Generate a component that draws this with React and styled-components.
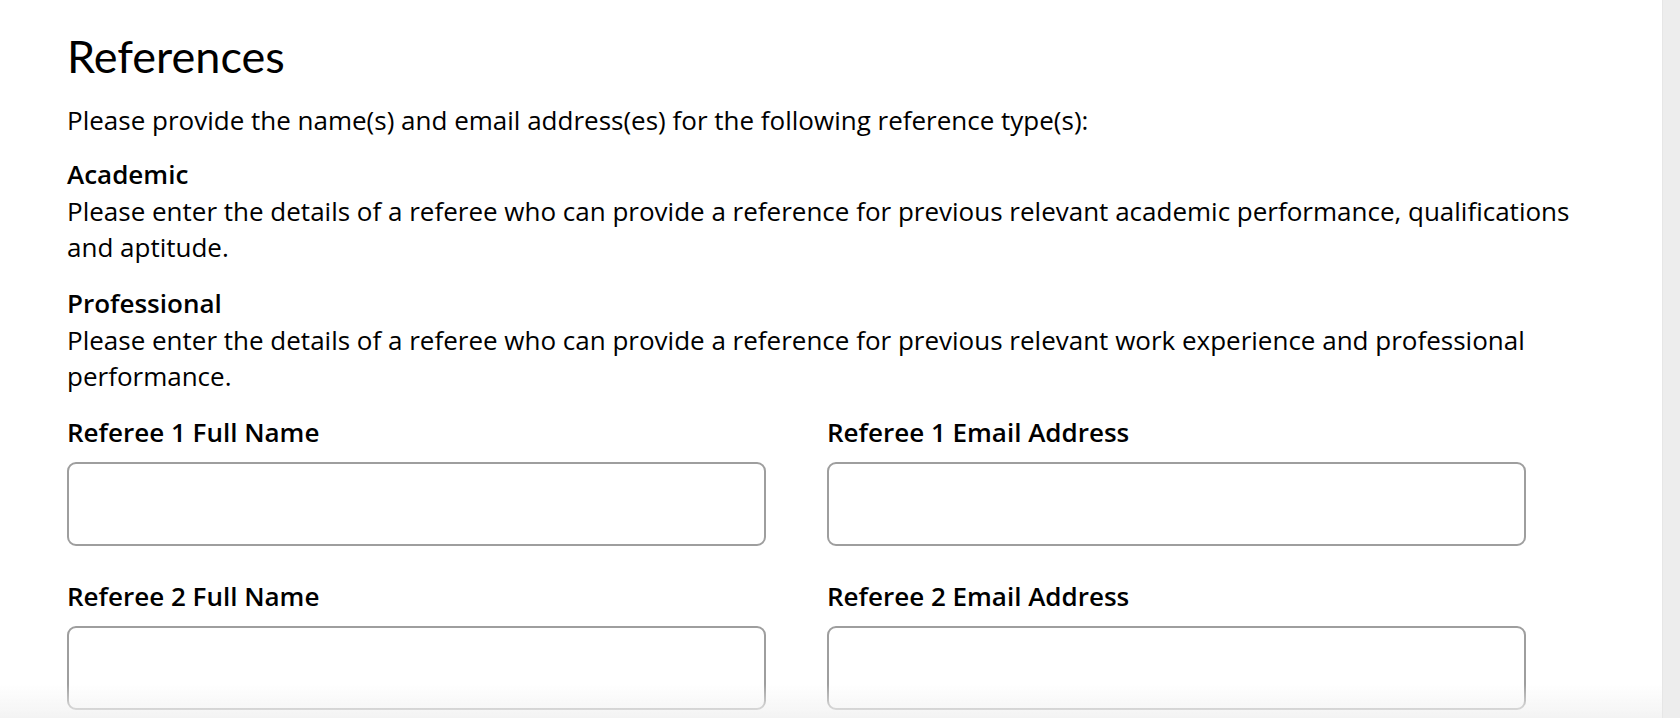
import React from 'react';
import styled, { createGlobalStyle } from 'styled-components';

const GlobalStyle = createGlobalStyle`
  html, body {
    margin: 0;
    padding: 0;
    background: #ffffff;
    overflow: hidden;
  }
  body {
    font-family: "Open Sans", "Noto Sans", sans-serif;
    color: #000;
  }
  * {
    box-sizing: border-box;
  }
`;

const Page = styled.div`
  display: flex;
  width: 100%;
  height: 718px;
`;

const Main = styled.main`
  flex: 1;
  padding: 29px 67px 0 67px;
  overflow: hidden;
`;

const ScrollTrack = styled.div`
  width: 18px;
  flex-shrink: 0;
  background: #ededed;
  border-left: 1px solid #e6e6e6;
`;

const BottomFade = styled.div`
  position: fixed;
  left: 0;
  right: 18px;
  bottom: 0;
  height: 34px;
  pointer-events: none;
  background: linear-gradient(to bottom, rgba(245, 245, 245, 0) 0%, rgba(242, 242, 242, 0.9) 100%);
`;

const Title = styled.h1`
  font-family: Lato, "Open Sans", sans-serif;
  font-weight: 400;
  font-size: 45px;
  line-height: 54px;
  margin: 0 0 19px;
  color: #000;
`;

const Text = styled.p`
  font-size: 26px;
  line-height: 36px;
  margin: 0 0 ${(p) => p.$gap ?? 18}px;
`;

const Block = styled.section`
  margin-bottom: 20px;
`;

const BlockTitle = styled.h3`
  font-size: 26px;
  line-height: 36px;
  font-weight: 600;
  margin: 0 0 1px;
`;

const FormGrid = styled.div`
  display: grid;
  grid-template-columns: repeat(2, 699px);
  column-gap: 61px;
  row-gap: 32px;
`;

const Field = styled.div`
  display: flex;
  flex-direction: column;
  gap: 12px;
`;

const Label = styled.label`
  font-size: 26px;
  line-height: 36px;
  font-weight: 600;
`;

const Input = styled.input`
  height: 84px;
  width: 100%;
  border: 2px solid #9e9e9e;
  border-radius: 9px;
  background: #fff;
  font: inherit;
  font-size: 24px;
  padding: 0 16px;
  outline: none;
`;

const fields = [
  { id: 'ref1-name', label: 'Referee 1 Full Name' },
  { id: 'ref1-email', label: 'Referee 1 Email Address' },
  { id: 'ref2-name', label: 'Referee 2 Full Name' },
  { id: 'ref2-email', label: 'Referee 2 Email Address' },
];

const App = () => {
  return (
    <>
      <GlobalStyle />
      <Page>
        <Main>
          <Title>References</Title>
          <Text>
            Please provide the name(s) and email address(es) for the following reference type(s):
          </Text>

          <Block>
            <BlockTitle>Academic</BlockTitle>
            <Text $gap={0}>
              Please enter the details of a referee who can provide a reference for previous relevant academic performance, qualifications and aptitude.
            </Text>
          </Block>

          <Block>
            <BlockTitle>Professional</BlockTitle>
            <Text $gap={0}>
              Please enter the details of a referee who can provide a reference for previous relevant work experience and professional performance.
            </Text>
          </Block>

          <FormGrid>
            {fields.map((f) => (
              <Field key={f.id}>
                <Label htmlFor={f.id}>{f.label}</Label>
                <Input id={f.id} type={f.id.includes('email') ? 'email' : 'text'} />
              </Field>
            ))}
          </FormGrid>
        </Main>
        <ScrollTrack />
      </Page>
      <BottomFade />
    </>
  );
};

export default App;
